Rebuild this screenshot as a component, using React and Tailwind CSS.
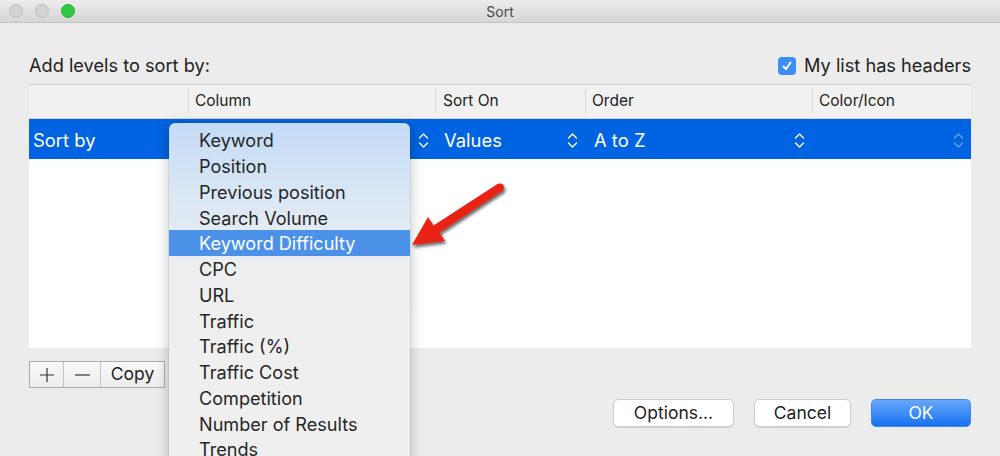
import React from 'react';

const items = [
  'Keyword',
  'Position',
  'Previous position',
  'Search Volume',
  'Keyword Difficulty',
  'CPC',
  'URL',
  'Traffic',
  'Traffic (%)',
  'Traffic Cost',
  'Competition',
  'Number of Results',
  'Trends',
];

const UpDown = ({ className = '' }) => (
  <svg width="11" height="17" viewBox="0 0 11 17" className={className} fill="none" stroke="currentColor" strokeWidth="1.3" strokeLinecap="round" strokeLinejoin="round">
    <path d="M1.5 6 L5.5 2 L9.5 6" />
    <path d="M1.5 11 L5.5 15 L9.5 11" />
  </svg>
);

const Arrow = () => (
  <svg className="absolute left-0 top-0 pointer-events-none" width="1000" height="456">
    <defs>
      <filter id="sh" x="-20%" y="-20%" width="140%" height="140%">
        <feDropShadow dx="1.5" dy="2.5" stdDeviation="1.6" floodColor="#000" floodOpacity="0.6" />
      </filter>
    </defs>
    <g filter="url(#sh)" fill="#ea2219">
      <polygon points="412,245 445,241 439.5,232.5 502,191 497.5,184 433.5,225.5 428,217" />
      <circle cx="499.8" cy="187.5" r="4.1" />
    </g>
  </svg>
);

export default function App() {
  return (
    <div className="relative w-[1000px] h-[456px] overflow-hidden bg-[#ececec] text-[#222]" style={{ fontFamily: 'Inter, "Noto Sans", sans-serif' }}>
      {/* title bar */}
      <div className="relative h-[23px] flex items-center border-b border-[#c4c4c4] bg-[linear-gradient(#ececec,#d6d6d6)]">
        <div className="flex items-center gap-[12px] pl-[9px]">
          <span className="w-[14px] h-[14px] rounded-full bg-[#d3d3d3] border border-[#c0c0c0]" />
          <span className="w-[14px] h-[14px] rounded-full bg-[#d3d3d3] border border-[#c0c0c0]" />
          <span className="w-[14px] h-[14px] rounded-full bg-[#2bc840] border border-[#24b236]" />
        </div>
        <div className="absolute inset-0 flex items-center justify-center text-[14px] text-[#4a4a4a]">Sort</div>
      </div>

      <div className="px-[29px]">
        <div className="mt-[32px] h-[22px] flex items-center justify-between text-[18.2px]">
          <span>Add levels to sort by:</span>
          <label className="flex items-center gap-[8px]">
            <span className="w-[18px] h-[18px] rounded-[4px] bg-[#3d8ef6] flex items-center justify-center">
              <svg width="12" height="12" viewBox="0 0 12 12" fill="none" stroke="white" strokeWidth="2" strokeLinecap="round" strokeLinejoin="round">
                <path d="M2.5 6.5 L5 9 L9.5 2.5" />
              </svg>
            </span>
            My list has headers
          </label>
        </div>

        {/* table */}
        <div className="mt-[7px] w-[942px] border-t border-[#cfcfcf]">
          <div className="h-[34px] flex items-center bg-[#f1f1f1] border-b border-[#d2d2d2] text-[15.5px] pb-[1px]">
            <div className="w-[159px]" />
            <div className="w-[247px] h-[24px] flex items-center border-l border-[#d6d6d6] pl-[6px]">Column</div>
            <div className="w-[150px] h-[24px] flex items-center border-l border-[#d6d6d6] pl-[7px]">Sort On</div>
            <div className="w-[227px] h-[24px] flex items-center border-l border-[#d6d6d6] pl-[6px]">Order</div>
            <div className="flex-1 h-[24px] flex items-center border-l border-[#d6d6d6] pl-[6px]">Color/Icon</div>
          </div>
          <div className="h-[40px] flex items-center bg-[#0063e1] text-white text-[18.4px] pt-[3px]">
            <div className="w-[159px] pl-[4px]">Sort by</div>
            <div className="w-[247px] flex justify-end pr-[6px]"><UpDown /></div>
            <div className="w-[150px] flex items-center justify-between pl-[9px] pr-[7px]">Values<UpDown /></div>
            <div className="w-[227px] flex items-center justify-between pl-[9px] pr-[7px]">A to Z<UpDown /></div>
            <div className="flex-1 flex justify-end pr-[7px]"><UpDown className="text-[#6aa5f0]" /></div>
          </div>
          <div className="h-[189px] bg-white" />
        </div>

        <div className="mt-[13px] flex w-[136px] h-[27px] border border-[#ababab] bg-[linear-gradient(#f8f8f8,#ececec)] text-[17.5px]">
          <div className="w-[34px] flex items-center justify-center border-r border-[#c4c4c4]">
            <svg width="14" height="14" viewBox="0 0 14 14" stroke="#333" strokeWidth="1.2"><path d="M7 0 V14 M0 7 H14" /></svg>
          </div>
          <div className="w-[37px] flex items-center justify-center border-r border-[#c4c4c4]">
            <svg width="15" height="14" viewBox="0 0 15 14" stroke="#333" strokeWidth="1.2"><path d="M0 7 H15" /></svg>
          </div>
          <div className="flex-1 flex items-center justify-center">Copy</div>
        </div>

        <div className="mt-[11px] flex justify-end gap-[20px] text-[17.5px]">
          <button className="w-[121px] h-[28px] rounded-[5px] bg-white border border-[#cdcdcd] shadow-[0_1px_1px_rgba(0,0,0,0.12)]">Options...</button>
          <button className="w-[97px] h-[28px] rounded-[5px] bg-white border border-[#cdcdcd] shadow-[0_1px_1px_rgba(0,0,0,0.12)]">Cancel</button>
          <button className="w-[100px] h-[28px] rounded-[5px] bg-[linear-gradient(#68a7fb,#1772f2)] border border-[#3b88f0] text-white">OK</button>
        </div>
      </div>

      {/* popup menu */}
      <div className="absolute left-[169px] top-[123px] w-[241px] h-[360px] rounded-[6px] pt-[4px] bg-[linear-gradient(#c3dbf6_0px,#dce8f5_80px,#eceef0_140px,#efefef_200px)] shadow-[0_4px_14px_rgba(0,0,0,0.25),0_0_0_1px_rgba(0,0,0,0.06)] text-[18.1px] text-[#262626]">
        {items.map((it) => (
          <div
            key={it}
            className={`h-[25.75px] flex items-center pl-[30px] pt-[2px] ${it === 'Keyword Difficulty' ? 'bg-[#4b91e8] text-white' : ''}`}
          >
            {it}
          </div>
        ))}
      </div>

      <Arrow />
    </div>
  );
}
